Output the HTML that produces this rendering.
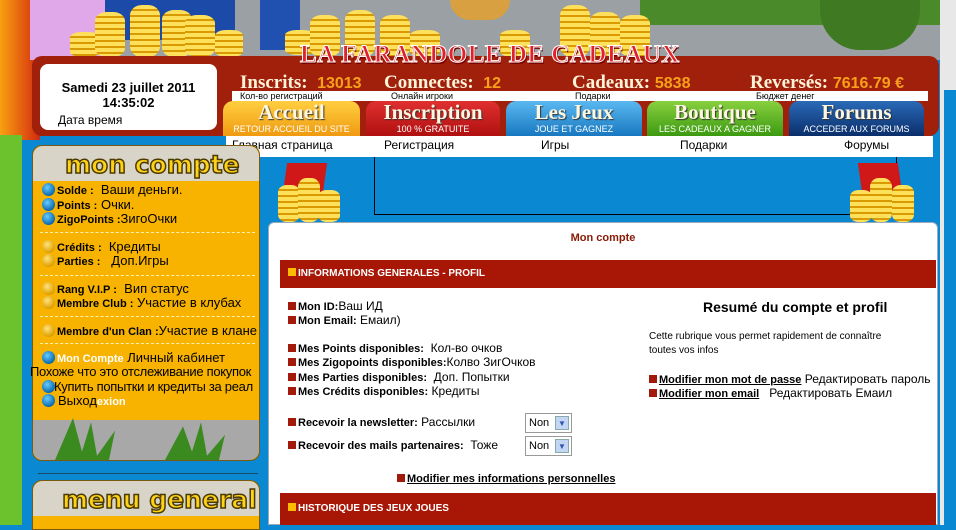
<!DOCTYPE html>
<html><head><meta charset="utf-8"><style>
*{margin:0;padding:0;box-sizing:border-box}
body{width:956px;height:525px;overflow:hidden;position:relative;background:#0b88d2;font-family:"Liberation Sans",Arial,sans-serif;}
.a{position:absolute}
.coin{position:absolute;background:repeating-linear-gradient(180deg,#ffe05a 0 4px,#d89a00 4px 6px);border-radius:40%/20%;}
.bt{font-family:"Liberation Serif",serif;font-weight:bold;color:#fff4d8;text-shadow:1px 1px 0 #5a2a00}
.st{font-family:"Liberation Serif",serif;font-weight:bold;font-size:19px;color:#fff3d8;white-space:nowrap}
.num{font-family:"Liberation Sans",sans-serif;font-weight:bold;font-size:16px;color:#f9a01b}
.tab{position:absolute;top:101px;height:35px;border-radius:10px 10px 0 0;text-align:center}
.tab b{display:block;font-family:"Liberation Serif",serif;font-size:21px;color:#fff8e0;line-height:23px;text-shadow:1px 1px 1px #333}
.tab i{display:block;font-style:normal;font-size:9px;color:#fff;line-height:10px}
.sb{position:absolute;left:42px;font-size:13px;color:#000;white-space:nowrap}
.sb .d{display:inline-block;width:13px;height:13px;border-radius:50%;vertical-align:-2px;margin-right:2px}
.bl{background:radial-gradient(circle at 40% 35%,#6cf,#0a6ab0 70%,#03365e)}
.gd{background:radial-gradient(circle at 40% 35%,#ffe27a,#e0a000 70%,#8a5a00)}
.sb b{font-size:11px}
.dash{position:absolute;left:40px;width:215px;border-top:1px dashed #fff2b0}
.m{position:absolute;font-size:12px;color:#000;white-space:nowrap}
.m b{font-size:11px}
.sq{display:inline-block;width:8px;height:8px;background:#a11a0c;margin-right:2px}
.sel{position:absolute;width:47px;height:20px;border:1px solid #999;background:#fff;font-size:11px;padding:3px 3px}
.sel span{position:absolute;right:2px;top:2px;width:14px;height:14px;background:#c4d6f6;border:1px solid #8aa;font-size:8px;color:#35a;text-align:center;line-height:13px}
</style></head><body>
<!-- top scene -->
<div class="a" style="left:0;top:0;width:956px;height:60px;background:#9aa0a4"></div>
<div class="a" style="left:0;top:0;width:40px;height:140px;background:linear-gradient(90deg,#f9a010,#d22a10)"></div>
<div class="a" style="left:0;top:135px;width:22px;height:390px;background:#6cc22c"></div>
<div class="a" style="left:30px;top:0;width:75px;height:60px;background:#e0a8e8"></div>
<div class="a" style="left:105px;top:0;width:130px;height:40px;background:#1b4aa8"></div>
<div class="a" style="left:260px;top:0;width:40px;height:50px;background:#2050b0"></div>
<div class="a" style="left:640px;top:0;width:300px;height:25px;background:#4a8a2a"></div>
<div class="a" style="left:820px;top:0;width:100px;height:50px;background:#3f7a22;border-radius:0 0 40px 40px"></div>
<div class="a" style="left:940px;top:0;width:16px;height:525px;background:#e8e8e8"></div>
<div class="a" style="left:944px;top:90px;width:12px;height:435px;background:#0b88d2"></div>
<div class="coin" style="left:70px;top:32px;width:30px;height:25px"></div>
<div class="coin" style="left:95px;top:12px;width:30px;height:45px"></div>
<div class="coin" style="left:130px;top:5px;width:30px;height:52px"></div>
<div class="coin" style="left:162px;top:10px;width:30px;height:47px"></div>
<div class="coin" style="left:185px;top:15px;width:30px;height:42px"></div>
<div class="coin" style="left:215px;top:30px;width:28px;height:27px"></div>
<div class="coin" style="left:285px;top:30px;width:30px;height:25px"></div>
<div class="coin" style="left:310px;top:15px;width:30px;height:42px"></div>
<div class="coin" style="left:345px;top:10px;width:30px;height:47px"></div>
<div class="coin" style="left:380px;top:15px;width:30px;height:42px"></div>
<div class="coin" style="left:410px;top:30px;width:30px;height:27px"></div>
<div class="coin" style="left:500px;top:30px;width:30px;height:27px"></div>
<div class="coin" style="left:560px;top:5px;width:30px;height:52px"></div>
<div class="coin" style="left:590px;top:12px;width:30px;height:45px"></div>
<div class="coin" style="left:620px;top:15px;width:30px;height:42px"></div>
<div class="a" style="left:450px;top:0;width:60px;height:20px;background:#d8a040;border-radius:0 0 30px 30px"></div>
<!-- header red -->
<div class="a" style="left:32px;top:56px;width:907px;height:80px;background:#a0200c;border-radius:10px"></div>
<div class="a bt" style="left:300px;top:41px;font-size:25px;letter-spacing:0.5px;color:#e0202a;-webkit-text-stroke:1px #fff;text-shadow:1px 2px 0 #700;white-space:nowrap">LA FARANDOLE DE CADEAUX</div>
<div class="a" style="left:40px;top:64px;width:177px;height:66px;background:#fff;border-radius:8px"></div>
<div class="a" style="left:40px;top:80px;width:177px;text-align:center;font-weight:bold;font-size:13px;line-height:15px">Samedi 23 juillet 2011<br>14:35:02</div>
<div class="a" style="left:58px;top:113px;font-size:12px">Дата время</div>
<div class="a st" style="left:240px;top:72px">Inscrits:&nbsp; <span class="num">13013</span></div>
<div class="a st" style="left:384px;top:72px">Connectes:&nbsp; <span class="num">12</span></div>
<div class="a st" style="left:572px;top:72px">Cadeaux:&nbsp;<span class="num">5838</span></div>
<div class="a st" style="left:750px;top:72px">Reversés:&nbsp;<span class="num">7616.79 €</span></div>
<div class="a" style="left:232px;top:91px;width:696px;height:10px;background:#fff"></div>
<div class="a" style="left:240px;top:90px;font-size:9px;line-height:12px">Кол-во регистраций</div>
<div class="a" style="left:391px;top:90px;font-size:9px;line-height:12px">Онлайн игроки</div>
<div class="a" style="left:575px;top:90px;font-size:9px;line-height:12px">Подарки</div>
<div class="a" style="left:756px;top:90px;font-size:9px;line-height:12px">Бюджет денег</div>
<!-- tabs -->
<div class="tab" style="left:223px;width:137px;background:linear-gradient(#ffcf40,#f09a10)"><b>Accueil</b><i>RETOUR ACCUEIL DU SITE</i></div>
<div class="tab" style="left:366px;width:134px;background:linear-gradient(#e03030,#b01010)"><b>Inscription</b><i>100 % GRATUITE</i></div>
<div class="tab" style="left:506px;width:136px;background:linear-gradient(#5ab8f0,#1878c0)"><b>Les Jeux</b><i>JOUE ET GAGNEZ</i></div>
<div class="tab" style="left:647px;width:136px;background:linear-gradient(#88d040,#3c9a10)"><b>Boutique</b><i>LES CADEAUX A GAGNER</i></div>
<div class="tab" style="left:789px;width:135px;background:linear-gradient(#2a6ab8,#0a2e6a)"><b>Forums</b><i>ACCEDER AUX FORUMS</i></div>
<div class="a" style="left:226px;top:136px;width:707px;height:21px;background:#fff"></div>
<div class="a" style="left:232px;top:138px;font-size:12px">Главная страница</div>
<div class="a" style="left:384px;top:138px;font-size:12px">Регистрация</div>
<div class="a" style="left:541px;top:138px;font-size:12px">Игры</div>
<div class="a" style="left:680px;top:138px;font-size:12px">Подарки</div>
<div class="a" style="left:844px;top:138px;font-size:12px">Форумы</div>
<!-- main top -->
<div class="a" style="left:374px;top:157px;width:523px;height:58px;border:1px solid #000;border-top:none"></div>
<div class="a" style="left:285px;top:163px;width:40px;height:30px;background:#d01818;transform:skew(-8deg)"></div>
<div class="coin" style="left:278px;top:185px;width:22px;height:37px"></div>
<div class="coin" style="left:298px;top:178px;width:22px;height:44px"></div>
<div class="coin" style="left:318px;top:190px;width:22px;height:32px"></div>
<div class="a" style="left:860px;top:163px;width:40px;height:30px;background:#d01818;transform:skew(8deg)"></div>
<div class="coin" style="left:850px;top:190px;width:22px;height:32px"></div>
<div class="coin" style="left:870px;top:178px;width:22px;height:44px"></div>
<div class="coin" style="left:892px;top:185px;width:22px;height:37px"></div>
<!-- content -->
<div class="a" style="left:268px;top:222px;width:670px;height:303px;background:#fff;border-radius:6px 6px 0 0;border:1px solid #9ab"></div>
<div class="a" style="left:268px;top:232px;width:670px;text-align:center;font-weight:bold;font-size:11px;color:#8a1a08">Mon compte</div>
<div class="a" style="left:280px;top:260px;width:656px;height:28px;background:#a81606"></div>
<div class="a" style="left:288px;top:268px;font-weight:bold;font-size:10px;color:#fff"><span class="sq" style="background:#fb0"></span>INFORMATIONS GENERALES - PROFIL</div>
<div class="m" style="left:288px;top:299px"><span class="sq"></span><b>Mon ID:</b>Ваш ИД</div>
<div class="m" style="left:288px;top:313px"><span class="sq"></span><b>Mon Email:</b> Емаил)</div>
<div class="m" style="left:288px;top:341px"><span class="sq"></span><b>Mes Points disponibles:</b>&nbsp; Кол-во очков</div>
<div class="m" style="left:288px;top:355px"><span class="sq"></span><b>Mes Zigopoints disponibles:</b>Колво ЗигОчков</div>
<div class="m" style="left:288px;top:370px"><span class="sq"></span><b>Mes Parties disponibles:</b>&nbsp; Доп. Попытки</div>
<div class="m" style="left:288px;top:384px"><span class="sq"></span><b>Mes Crédits disponibles:</b> Кредиты</div>
<div class="m" style="left:288px;top:415px"><span class="sq"></span><b>Recevoir la newsletter:</b> Рассылки</div>
<div class="m" style="left:288px;top:438px"><span class="sq"></span><b>Recevoir des mails partenaires:</b>&nbsp; Тоже</div>
<div class="sel" style="left:525px;top:413px">Non<span>▼</span></div>
<div class="sel" style="left:525px;top:436px">Non<span>▼</span></div>
<div class="m" style="left:397px;top:471px"><span class="sq"></span><b style="text-decoration:underline">Modifier mes informations personnelles</b></div>
<div class="a" style="left:703px;top:299px;font-weight:bold;font-size:14px">Resumé du compte et profil</div>
<div class="a" style="left:649px;top:330px;font-size:10px;line-height:14px">Cette rubrique vous permet rapidement de connaître<br>toutes vos infos</div>
<div class="m" style="left:649px;top:372px"><span class="sq"></span><b style="text-decoration:underline">Modifier mon mot de passe</b> Редактировать пароль</div>
<div class="m" style="left:649px;top:386px"><span class="sq"></span><b style="text-decoration:underline">Modifier mon email</b>&nbsp;&nbsp; Редактировать Емаил</div>
<div class="a" style="left:280px;top:493px;width:656px;height:32px;background:#a81606"></div>
<div class="a" style="left:288px;top:503px;font-weight:bold;font-size:10px;color:#fff"><span class="sq" style="background:#fb0"></span>HISTORIQUE DES JEUX JOUES</div>
<!-- sidebar -->
<div class="a" style="left:32px;top:145px;width:228px;height:316px;background:#f7b300;border-radius:10px;border:1px solid #7a5a10"></div>
<div class="a" style="left:33px;top:146px;width:226px;height:35px;background:#d8d4c8;border-radius:10px 10px 0 0"></div>
<div class="a" style="left:65px;top:150px;font-family:'DejaVu Sans',sans-serif;font-weight:bold;font-size:25px;color:#ffd21a;-webkit-text-stroke:1.5px #4a3a00;line-height:30px">mon compte</div>
<div class="sb" style="top:182px"><span class="d bl"></span><b>Solde :</b>&nbsp; Ваши деньги.</div>
<div class="sb" style="top:197px"><span class="d bl"></span><b>Points :</b> Очки.</div>
<div class="sb" style="top:211px"><span class="d bl"></span><b>ZigoPoints :</b>ЗигоОчки</div>
<div class="dash" style="top:232px"></div>
<div class="sb" style="top:239px"><span class="d gd"></span><b>Crédits :</b>&nbsp; Кредиты</div>
<div class="sb" style="top:253px"><span class="d gd"></span><b>Parties :</b>&nbsp;&nbsp; Доп.Игры</div>
<div class="dash" style="top:275px"></div>
<div class="sb" style="top:281px"><span class="d gd"></span><b>Rang V.I.P :</b>&nbsp; Вип статус</div>
<div class="sb" style="top:295px"><span class="d gd"></span><b>Membre Club :</b> Участие в клубах</div>
<div class="dash" style="top:316px"></div>
<div class="sb" style="top:323px"><span class="d gd"></span><b>Membre d'un Clan :</b>Участие в клане</div>
<div class="dash" style="top:343px"></div>
<div class="sb" style="top:350px"><span class="d bl"></span><b style="color:#fff">Mon Compte</b> Личный кабинет</div>
<div class="sb" style="top:379px"><span class="d bl"></span></div>
<div class="sb" style="top:393px"><span class="d bl"></span></div>
<div class="a" style="left:30px;top:364px;font-size:13px;white-space:nowrap;letter-spacing:-0.3px">Похоже что это отслеживание покупок</div>
<div class="a" style="left:54px;top:379px;font-size:13px;white-space:nowrap;letter-spacing:-0.3px">Купить попытки и кредиты за реал</div>
<div class="a" style="left:58px;top:393px;font-size:13px;white-space:nowrap">Выход<b style="color:#fff;font-size:11px">exion</b></div>
<div class="a" style="left:33px;top:420px;width:226px;height:40px;background:#a8a8a8;border-radius:0 0 10px 10px"></div>
<div class="a" style="left:55px;top:418px;width:60px;height:42px;background:#3a8a20;clip-path:polygon(0 100%,30% 0,45% 80%,60% 10%,70% 90%,100% 30%,90% 100%)"></div>
<div class="a" style="left:165px;top:418px;width:60px;height:42px;background:#3a8a20;clip-path:polygon(0 100%,30% 20%,45% 80%,60% 10%,70% 90%,100% 40%,90% 100%)"></div>
<div class="a" style="left:38px;top:473px;width:220px;border-top:1px solid #1a4a6a"></div>
<div class="a" style="left:32px;top:480px;width:228px;height:50px;background:#f7b300;border-radius:10px 10px 0 0;border:1px solid #7a5a10"></div>
<div class="a" style="left:33px;top:481px;width:226px;height:35px;background:#d8d4c8;border-radius:10px 10px 0 0"></div>
<div class="a" style="left:62px;top:485px;font-family:'DejaVu Sans',sans-serif;font-weight:bold;font-size:25px;color:#ffd21a;-webkit-text-stroke:1.5px #4a3a00;line-height:30px">menu general</div>
</body></html>
